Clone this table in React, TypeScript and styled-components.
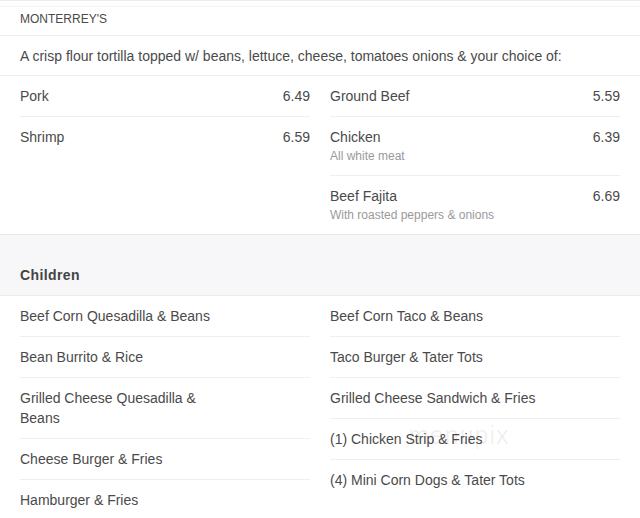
import React from "react";
import styled, { createGlobalStyle } from "styled-components";

const Global = createGlobalStyle`
  html, body { margin: 0; padding: 0; background: #fff; }
  body { font-family: "Liberation Sans", Arial, sans-serif; color: #4a4a4a; }
  * { box-sizing: border-box; }
`;

const Page = styled.div`
  position: relative;
  width: 640px;
  border-top: 1px solid #ececec;
  padding-top: 5px;
  overflow: hidden;
`;

const Section = styled.section`
  border-top: 1px solid #f4f4f4;
`;

const SectionTitle = styled.div`
  padding: 4px 20px 8px;
  font-size: 12px;
  line-height: 16px;
  text-transform: uppercase;
  color: #4a4a4a;
  border-bottom: 1px solid #ededed;
`;

const Description = styled.div`
  padding: 10px 20px 9px;
  font-size: 14px;
  line-height: 20px;
  color: #4a4a4a;
  border-bottom: 1px solid #ededed;
`;

const Columns = styled.div`
  display: grid;
  grid-template-columns: 1fr 1fr;
  column-gap: 20px;
  padding: 0 20px;
  align-items: start;
`;

const Column = styled.div`
  display: flex;
  flex-direction: column;
`;

const Row = styled.div`
  display: flex;
  justify-content: space-between;
  align-items: flex-start;
  padding: 10px 0;
  border-bottom: 1px solid #efefef;
  &:last-child { border-bottom: none; }
`;

const NameBlock = styled.div`
  display: flex;
  flex-direction: column;
  max-width: 74%;
`;

const Name = styled.div`
  font-size: 14px;
  line-height: 20px;
  color: #4a4a4a;
`;

const Note = styled.div`
  font-size: 12px;
  line-height: 18px;
  color: #9a9a9a;
`;

const Price = styled.div`
  font-size: 14px;
  line-height: 20px;
  color: #4a4a4a;
`;

const Band = styled.div`
  background: #f7f7f9;
  border-top: 1px solid #e8e8ea;
  border-bottom: 1px solid #ececec;
  padding: 30px 20px 10px;
  font-size: 14px;
  line-height: 20px;
  font-weight: bold;
  letter-spacing: 0.4px;
  color: #444;
`;

const Watermark = styled.div`
  position: absolute;
  left: 408px;
  top: 420px;
  font-family: "Liberation Sans", Arial, sans-serif;
  font-size: 25px;
  letter-spacing: 1px;
  color: rgba(0, 0, 0, 0.07);
  pointer-events: none;
`;

type Item = { name: string; price?: string; note?: string };

const monterreyLeft: Item[] = [
  { name: "Pork", price: "6.49" },
  { name: "Shrimp", price: "6.59" },
];
const monterreyRight: Item[] = [
  { name: "Ground Beef", price: "5.59" },
  { name: "Chicken", price: "6.39", note: "All white meat" },
  { name: "Beef Fajita", price: "6.69", note: "With roasted peppers & onions" },
];
const childrenLeft: Item[] = [
  { name: "Beef Corn Quesadilla & Beans" },
  { name: "Bean Burrito & Rice" },
  { name: "Grilled Cheese Quesadilla & Beans" },
  { name: "Cheese Burger & Fries" },
  { name: "Hamburger & Fries" },
];
const childrenRight: Item[] = [
  { name: "Beef Corn Taco & Beans" },
  { name: "Taco Burger & Tater Tots" },
  { name: "Grilled Cheese Sandwich & Fries" },
  { name: "(1) Chicken Strip & Fries" },
  { name: "(4) Mini Corn Dogs & Tater Tots" },
];

const ItemList = ({ items }: { items: Item[] }) => (
  <Column>
    {items.map((it) => (
      <Row key={it.name}>
        <NameBlock>
          <Name>{it.name}</Name>
          {it.note && <Note>{it.note}</Note>}
        </NameBlock>
        {it.price && <Price>{it.price}</Price>}
      </Row>
    ))}
  </Column>
);

export default function App() {
  return (
    <Page>
      <Global />
      <Section>
        <SectionTitle>Monterrey's</SectionTitle>
        <Description>
          A crisp flour tortilla topped w/ beans, lettuce, cheese, tomatoes onions &amp; your choice of:
        </Description>
        <Columns>
          <ItemList items={monterreyLeft} />
          <ItemList items={monterreyRight} />
        </Columns>
      </Section>
      <Band>Children</Band>
      <Columns>
        <ItemList items={childrenLeft} />
        <ItemList items={childrenRight} />
      </Columns>
      <Watermark>menupix</Watermark>
    </Page>
  );
}
